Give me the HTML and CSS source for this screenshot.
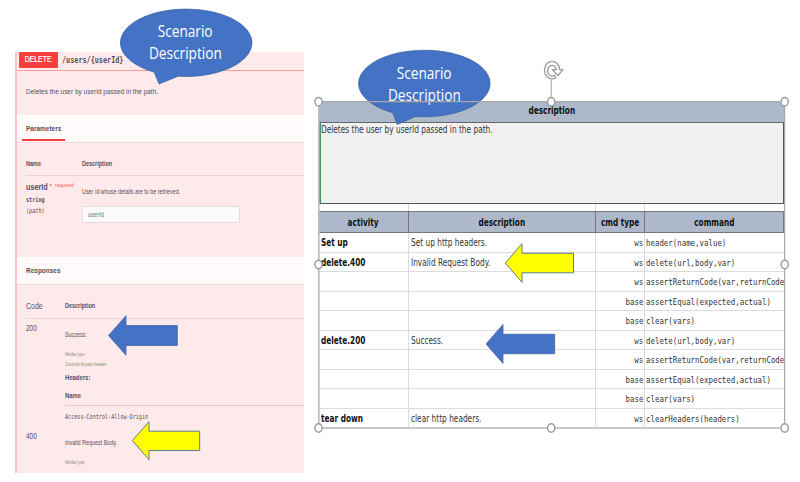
FILE: index.html
```html
<!DOCTYPE html>
<html lang="en">
<head>
<meta charset="utf-8">
<title>Scenario Description</title>
<link rel="stylesheet" href="styles.css">
</head>
<body>
<main class="slide">
  <section class="api">
    <header class="op"><b class="verb"><span>DELETE</span></b><span class="route">/users/{userId}</span></header>
    <div class="summary"><span class="arial">Deletes the user by userId passed in the path.</span></div>
    <div class="band"><h2 class="tab"><span>Parameters</span></h2></div>
    <div class="param-head"><b>Name</b><b>Description</b></div>
    <div class="param">
      <div class="param-name">
        <div class="pname"><b>userId</b><i>*</i><em>required</em></div>
        <div class="ptype"><span>string</span></div>
        <div class="pin"><span>(path)</span></div>
      </div>
      <div class="param-desc">
        <div class="ptext"><span class="arial small">User Id whose details are to be retrieved.</span></div>
        <div class="field"><span>userId</span></div>
      </div>
    </div>
    <div class="band"><h2><span>Responses</span></h2></div>
    <div class="resp-head"><span class="code">Code</span><b>Description</b></div>
    <div class="resp">
      <div class="status"><span class="code">200</span></div>
      <div class="resp-body">
        <div class="msg"><span class="arial small">Success.</span></div>
        <div class="media"><span>Media type</span></div>
        <div class="accept"><span>Controls Accept header.</span></div>
        <div class="headers"><b>Headers:</b></div>
        <div class="hname"><b>Name</b></div>
        <div class="origin"><span>Access-Control-Allow-Origin</span></div>
      </div>
    </div>
    <div class="resp">
      <div class="status"><span class="code">400</span></div>
      <div class="resp-body">
        <div class="msg"><span class="arial small">Invalid Request Body.</span></div>
        <div class="media"><span>Media type</span></div>
      </div>
    </div>
  </section>

  <section class="sheet">
    <div class="sheet-title"><b class="bold">description</b></div>
    <div class="sheet-note"><span class="tah">Deletes the user by userId passed in the path.</span></div>
    <div class="row spacer"><div></div><div></div><div></div><div></div></div>
    <div class="row head"><div><b class="bold">activity</b></div><div><b class="bold">description</b></div><div><b class="bold">cmd type</b></div><div><b class="bold">command</b></div></div>
    <div class="row"><div><b class="bold">Set up</b></div><div><span class="tah">Set up http headers.</span></div><div><span class="mono">ws</span></div><div><span class="mono">header(name,value)</span></div></div>
    <div class="row"><div><b class="bold">delete.400</b></div><div><span class="tah">Invalid Request Body.</span></div><div><span class="mono">ws</span></div><div><span class="mono">delete(url,body,var)</span></div></div>
    <div class="row"><div></div><div></div><div><span class="mono">ws</span></div><div><span class="mono">assertReturnCode(var,returnCode</span></div></div>
    <div class="row"><div></div><div></div><div><span class="mono">base</span></div><div><span class="mono">assertEqual(expected,actual)</span></div></div>
    <div class="row"><div></div><div></div><div><span class="mono">base</span></div><div><span class="mono">clear(vars)</span></div></div>
    <div class="row"><div><b class="bold">delete.200</b></div><div><span class="tah">Success.</span></div><div><span class="mono">ws</span></div><div><span class="mono">delete(url,body,var)</span></div></div>
    <div class="row"><div></div><div></div><div><span class="mono">ws</span></div><div><span class="mono">assertReturnCode(var,returnCode</span></div></div>
    <div class="row"><div></div><div></div><div><span class="mono">base</span></div><div><span class="mono">assertEqual(expected,actual)</span></div></div>
    <div class="row"><div></div><div></div><div><span class="mono">base</span></div><div><span class="mono">clear(vars)</span></div></div>
    <div class="row"><div><b class="bold">tear down</b></div><div><span class="tah">clear http headers.</span></div><div><span class="mono">ws</span></div><div><span class="mono">clearHeaders(headers)</span></div></div>
  </section>

  <svg class="shapes" width="800" height="482" viewBox="0 0 800 482">
    <g fill="#4472c4" stroke="#37609f" stroke-width=".7">
      <path d="M154.200 72.200A65.800 33.700 0 1 1 178.200 76.200L159 84Z"/>
      <path d="M392.700 112.700A65.800 33.300 0 1 1 415.500 116.500L397.300 124.500Z"/>
      <path d="M108.500 335.500L126 315.700V325.500H177.300V345.500H126V355.300Z"/>
      <path d="M486 344L503 324.500V334.200H554.700V353.800H503V363.400Z"/>
    </g>
    <g fill="#ff0" stroke="#5f7f86" stroke-width="1">
      <path d="M132.300 440.500L149 421.600V431.200H199.700V450.500H149V459.800Z"/>
      <path d="M505.300 263L522 243.700V253.300H573.500V272.800H522V282.300Z"/>
    </g>
  </svg>
  <div class="callout one"><span>Scenario</span><span>Description</span></div>
  <div class="callout two"><span>Scenario</span><span>Description</span></div>
  <svg class="shapes" width="800" height="482" viewBox="0 0 800 482">
    <path d="M318.700 101.700H784.500" stroke="#a9a9a9" stroke-width="1.300" fill="none"/>
    <path d="M318.800 102V428M318.700 428H784.500" stroke="#bdbdbd" stroke-width="1.700" fill="none"/>
    <path d="M784.700 102V428M551.300 80V98" stroke="#b0b0b0" stroke-width="1.100" fill="none"/>
    <g fill="#fff" stroke="#9b9b9b" stroke-width="1.400">
      <ellipse cx="318.500" cy="101.700" rx="3.600" ry="4.200"/><ellipse cx="551.200" cy="101.700" rx="3.600" ry="4.200"/><ellipse cx="784.700" cy="101.700" rx="3.600" ry="4.200"/>
      <ellipse cx="318.500" cy="264.500" rx="3.600" ry="4.200"/><ellipse cx="784.700" cy="264.500" rx="3.600" ry="4.200"/>
      <ellipse cx="318.500" cy="428" rx="3.600" ry="4.200"/><ellipse cx="551.200" cy="428" rx="3.600" ry="4.200"/><ellipse cx="784.700" cy="428" rx="3.600" ry="4.200"/>
    </g>
    <path d="M555.800 77.800A7.600 8.700 0 1 1 559.700 69.700H563L558 75.500L552.500 69.700H556.300A4.400 5.400 0 1 0 554.300 75.300Z" fill="#fff" stroke="#999" stroke-width="1.300" stroke-linejoin="round"/>
  </svg>
</main>
</body>
</html>
```
FILE: styles.css
```css
* { box-sizing: border-box; }
body { margin: 0; background: #fff; }
.slide {
  position: relative; width: 800px; height: 482px; overflow: hidden;
  display: flex; align-items: flex-start; padding-left: 15px;
}
h2 { margin: 0; }
span, b { white-space: nowrap; }
.api span, .api b, .sheet span, .sheet b { display: inline-block; transform-origin: left center; }

/* API documentation panel */
.api {
  width: 289px; height: 421px; margin-top: 52px; flex: none; overflow: hidden;
  border-left: 2px solid #ffc3c5; background: #feeaeb;
  font-family: "Liberation Sans", Arial, sans-serif; color: #55505f;
}
.api > div, .api > header { padding-left: 8.500px; }
.api .op { display: flex; align-items: center; height: 19px; padding: 0 0 3px 2px; border-bottom: 1px solid #fb9a9c; }
.api .verb {
  width: 39px; height: 16px; background: #f93e3e; color: #fff; border-radius: 1px;
  font-size: 8.800px; line-height: 15px; text-align: center; flex: none; font-weight: normal;
}
.api .verb span { transform: scaleX(.78); transform-origin: center; margin: 0 -4px; -webkit-text-stroke: .2px #fff; }
.route { margin-left: 4px; font: bold 8.300px/16px "DejaVu Sans Mono", monospace; transform: scaleX(.82); }
.summary { height: 44px; display: flex; align-items: center; padding-bottom: 3px; }
.arial { font-size: 7.800px; transform: scaleX(.83); }
.arial.small { font-size: 7px; transform: scaleX(.77); }
.band { height: 28px; background: #fffbfa; border-bottom: 1px solid #efdcdd; }
.band h2 { font-size: 8px; line-height: 27px; height: 27px; }
.band h2 span { transform: scaleX(.81); }
.band .tab { position: relative; width: 40px; }
.band .tab::after { content: ""; position: absolute; left: -4px; bottom: 1px; width: 43px; height: 2.500px; background: #f93e3e; }
.param-head { display: grid; grid-template-columns: 56px 1fr; height: 33px; padding-top: 10px; font-size: 6.700px; line-height: 22px; position: relative; }
.param-head b, .resp-head b { transform: scaleX(.82); }
.param-head::after, .resp-head::after { content: ""; position: absolute; left: 8.500px; right: 0; bottom: 0; height: 1px; background: #ead3da; }
.param { display: grid; grid-template-columns: 56px 1fr; height: 81px; }
.param-name { padding-top: 4.500px; }
.pname { height: 13px; line-height: 13px; display: flex; font-size: 9.300px; }
.pname b { width: 23px; transform: scaleX(.78); }
.pname i, .pname em { font-style: normal; color: #f7585c; font-size: 6px; line-height: 9px; }
.pname i { font-weight: bold; margin: 1px 3px 0 1px; }
.pname em { transform: scaleX(.86); transform-origin: left; }
.ptype, .pin { font: bold 6.800px/13px "DejaVu Sans Mono", monospace; }
.ptype span, .pin span { transform: scaleX(.76); }
.pin { line-height: 9px; font-weight: normal; font-style: italic; }
.ptext { height: 29.500px; padding-top: 0; line-height: 26px; }
.field { width: 158px; height: 17px; border: 1px solid #e4dddd; border-radius: 2px; background: #fafafa; padding-left: 5px; font-size: 7px; line-height: 16px; color: #77757a; }
.field span { transform: scaleX(.82); }
.resp-head { display: grid; grid-template-columns: 39px 1fr; height: 34px; padding-top: 9px; font-size: 6.700px; line-height: 24px; position: relative; }
.code { font-size: 8.500px; transform: scaleX(.82); }
.resp { display: grid; grid-template-columns: 39px 1fr; }
.status { height: 18px; line-height: 14px; }
.status .code { transform: scaleX(.76); }
.resp-body > div { display: flex; align-items: center; }
.resp-body .msg { height: 31px; }
.resp-body .media { height: 8px; font-size: 5px; color: #908894; }
.media span, .accept span { transform: scaleX(.79); }
.resp-body .accept { height: 11px; font-size: 5px; color: #789568; }
.resp-body .headers { height: 16px; font-size: 7.500px; }
.resp-body .headers b, .resp-body .hname b { transform: scaleX(.79); }
.resp-body .hname { height: 21px; font-size: 7.500px; border-bottom: 1px solid #e3ccd5; }
.resp-body .origin { height: 21px; font: 7px "DejaVu Sans Mono", monospace; }
.origin span { transform: scaleX(.73); }

/* Spreadsheet panel */
.sheet {
  width: 467px; height: 327px; margin: 101px 0 0 14px; flex: none; overflow: hidden; padding-left: 1px;
  border-right: 1px solid #888;
  font-family: "DejaVu Sans", sans-serif; color: #333; background: #fff;
}
.sheet span, .sheet b { vertical-align: top; }
.sheet-title { height: 22px; background: #adb9ca; border-top: 1px solid #c4c4c4; border-bottom: 1px solid #63656b; text-align: center; line-height: 18px; }
.sheet-note { height: 81px; background: #f1f1f1; border: solid #555; border-width: 0 1px 1px; border-left: 2px solid #4b9160; line-height: 14px; }
.sheet b.bold { font-size: 10px; color: #111; transform: scaleX(.735); }
.tah { font-size: 10px; transform: scaleX(.74); }
.mono { font: 9.300px "DejaVu Sans Mono", monospace; transform: scaleX(.797); }
.row { display: grid; grid-template-columns: 90px 187px 49px 1fr; grid-template-rows: 100%; height: 19.500px; }
.row > div { border-right: 1px solid #dcdcdc; border-bottom: 1px solid #dcdcdc; line-height: 19px; padding-left: 2px; min-width: 0; }
.row > div:nth-child(3) { text-align: right; padding: 0 1px 0 0; }
.row > div:nth-child(3) .mono { transform-origin: right center; }
.row > div:nth-child(4) { padding-left: 1px; border-right: 0; }
.row > div .mono { line-height: 20px; }
.row.spacer { height: 7px; }
.row.spacer > div { border-bottom: 0; }
.row.head { height: 22px; }
.sheet .row.head > div { background: #adb9ca; border: solid #74777d; border-width: 1px 1px 1px 0; text-align: center; line-height: 22px; padding: 0; }
.sheet .row.head .bold, .sheet-title .bold { transform-origin: center; margin: 0 -12px; }

/* Drawing layer */
.shapes { position: absolute; left: 0; top: 0; }
.callout {
  position: absolute; width: 132px; display: flex; flex-direction: column; align-items: center;
  font: 15.500px/21.500px "Open Sans", sans-serif; color: #fff;
}
.callout span { transform: scaleX(.88); }
.callout.one { left: 119.500px; top: 21px; }
.callout.two { left: 358px; top: 63px; }
```
